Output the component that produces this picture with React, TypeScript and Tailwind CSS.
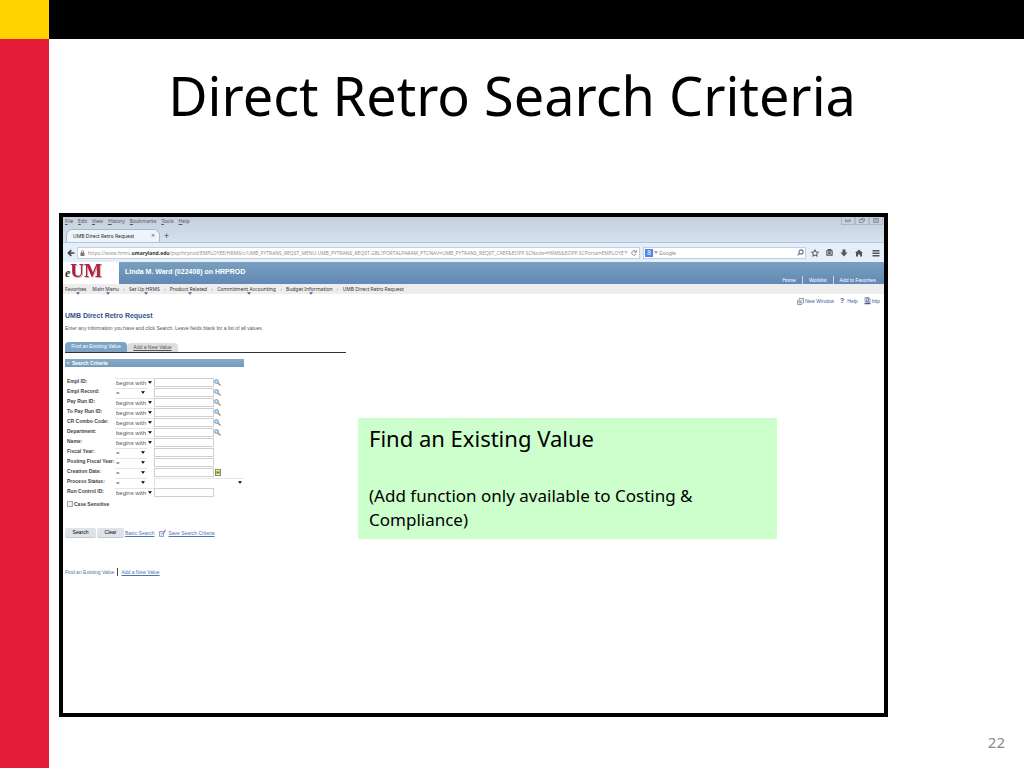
import type { ReactNode } from 'react';

const arial = "font-['Liberation_Sans',Arial,sans-serif]";
const noto = "font-['Noto_Sans',sans-serif]";

type Field = {
  id: string;
  label: string;
  op: 'begins with' | '=';
  extra?: 'lookup' | 'calendar' | 'list';
};

const fields: Field[] = [
  { id: 'empl-id', label: 'Empl ID:', op: 'begins with', extra: 'lookup' },
  { id: 'empl-record', label: 'Empl Record:', op: '=', extra: 'lookup' },
  { id: 'pay-run', label: 'Pay Run ID:', op: 'begins with', extra: 'lookup' },
  { id: 'to-pay-run', label: 'To Pay Run ID:', op: 'begins with', extra: 'lookup' },
  { id: 'combo', label: 'CR Combo Code:', op: 'begins with', extra: 'lookup' },
  { id: 'dept', label: 'Department:', op: 'begins with', extra: 'lookup' },
  { id: 'name', label: 'Name:', op: 'begins with' },
  { id: 'fiscal', label: 'Fiscal Year:', op: '=' },
  { id: 'posting', label: 'Posting Fiscal Year:', op: '=' },
  { id: 'created', label: 'Creation Date:', op: '=', extra: 'calendar' },
  { id: 'status', label: 'Process Status:', op: '=', extra: 'list' },
  { id: 'run-control', label: 'Run Control ID:', op: 'begins with' },
];

const crumbs = ['Main Menu', 'Set Up HRMS', 'Product Related', 'Commitment Accounting', 'Budget Information'];

function Caret({ className = '' }: { className?: string }) {
  return (
    <svg viewBox="0 0 6 4" className={`h-[3px] w-[4px] ${className}`} aria-hidden="true">
      <path d="M0 0h6L3 4z" fill="currentColor" />
    </svg>
  );
}

function Lookup() {
  return (
    <svg viewBox="0 0 14 14" className="size-[7px]" aria-hidden="true">
      <path d="M8 8l5 5" stroke="#c98a4a" strokeWidth="3" />
      <circle cx="5" cy="5" r="4" fill="#b5dcf7" stroke="#6f9cc9" strokeWidth="1.8" />
    </svg>
  );
}

function Calendar() {
  return (
    <svg viewBox="0 0 12 14" className="h-[7px] w-[6px]" aria-hidden="true">
      <rect x="1" y="1" width="10" height="12" fill="#e9ecb0" stroke="#8d9148" strokeWidth="2" />
      <path d="M4 4v6M8 4v6M4 7h4" stroke="#5c6130" strokeWidth="1.5" />
    </svg>
  );
}

function Picker({ id, label, value, className }: { id: string; label: string; value: string; className: string }) {
  return (
    <span className={`grid h-[9px] items-center ${className}`}>
      <select
        id={id}
        aria-label={label}
        defaultValue={value}
        className="col-start-1 row-start-1 h-[9px] w-full appearance-none border-t border-[#e6e6e6] bg-transparent pl-px text-[6px] leading-[8px] text-[#555]"
      >
        <option>{value}</option>
      </select>
      <Caret className="pointer-events-none col-start-1 row-start-1 mr-[2px] justify-self-end text-black" />
    </span>
  );
}

function Row({ field }: { field: Field }) {
  return (
    <div className="flex h-[10px] items-center">
      <label htmlFor={field.id} className="w-[48px] shrink-0 pb-[2px] text-[5px] leading-[8px] font-bold whitespace-nowrap text-[#444]">
        {field.label}
      </label>
      <div className="w-[39px] shrink-0">
        <Picker
          id={`${field.id}-op`}
          label={`${field.label} operator`}
          value={field.op}
          className={field.op === '=' ? 'w-[32px]' : 'w-[39px]'}
        />
      </div>
      {field.extra === 'list' ? (
        <Picker id={field.id} label={field.label} value="" className="w-[90px] border-l border-[#ddd]" />
      ) : (
        <input id={field.id} className="h-[9px] w-[60px] border border-[#cfcfcf] bg-white px-px text-[6px]" />
      )}
      {field.extra === 'lookup' && (
        <button type="button" aria-label={`Look up ${field.label}`}>
          <Lookup />
        </button>
      )}
      {field.extra === 'calendar' && (
        <button type="button" aria-label="Choose a date" className="ml-px">
          <Calendar />
        </button>
      )}
    </div>
  );
}

function WindowButton({ label, children }: { label: string; children: ReactNode }) {
  return (
    <button aria-label={label} className="flex h-[8px] w-[14px] items-center justify-center border border-t-0 border-[#b0bac4]">
      <svg viewBox="0 0 12 10" className="h-[5px] w-[6px]" fill="none" stroke="#7b8590" strokeWidth="1.6" aria-hidden="true">
        {children}
      </svg>
    </button>
  );
}

function BrowserChrome() {
  return (
    <div className={`${noto} text-[5px] leading-[8px] text-[#555]`}>
      <div className="bg-linear-to-b from-[#c3ced9] to-[#d5e2ef]">
        <div className="flex h-[10px] items-start pl-[2px]">
          <nav className="flex gap-[5px]" aria-label="Browser menu">
            {['File', 'Edit', 'View', 'History', 'Bookmarks', 'Tools', 'Help'].map((m) => (
              <button key={m} className="leading-[9px] first-letter:underline">
                {m}
              </button>
            ))}
          </nav>
          <div className="mr-px ml-auto flex">
            <WindowButton label="Minimize">
              <rect x="1" y="4" width="10" height="3" />
            </WindowButton>
            <WindowButton label="Restore">
              <path d="M4 3V1h7v5H8M1 3h7v6H1z" />
            </WindowButton>
            <WindowButton label="Close">
              <path d="M1 1h10v8H1zM3 2l6 6M9 2L3 8" />
            </WindowButton>
          </div>
        </div>
        <div className="flex h-[15px] items-end pl-[3px]">
          <div className="flex h-[13px] w-[94px] items-center justify-between rounded-t-md border border-b-0 border-[#a9b8c8] bg-[#eef4fb] pr-[4px] pl-[6px] text-[#222]">
            <span className="whitespace-nowrap">UMB Direct Retro Request</span>
            <button aria-label="Close tab" className="text-[7px] text-[#666]">×</button>
          </div>
          <button aria-label="New tab" className="ml-[4px] text-[9px] leading-[12px] text-[#444]">+</button>
        </div>
      </div>
      <div className="flex h-[20px] items-center border-t border-[#b3c5d9] bg-[#e6eff9] px-[4px]">
        <button aria-label="Back" className="mr-[2px] rounded-full text-[#444]">
          <svg viewBox="0 0 14 14" className="size-[8px]" fill="none" stroke="currentColor" strokeWidth="3" aria-hidden="true">
            <path d="M13 7H3M7.500 2L2.500 7l5 5" />
          </svg>
        </button>
        <div className="flex h-[12px] min-w-0 flex-1 items-center border border-[#c5d0dc] bg-white px-[2px]">
          <svg viewBox="0 0 10 12" className="mr-[3px] h-[6px] w-[5px] shrink-0" aria-hidden="true">
            <path d="M1 5h8v7H1z" fill="#777" />
            <path d="M3 6V3a2 2 0 014 0v3" fill="none" stroke="#777" strokeWidth="1.500" />
          </svg>
          <span className="min-w-0 flex-1 font-['Open_Sans',sans-serif] whitespace-nowrap text-[#8c8c8c]">
            https://www.hrms.<b className="text-[#333]">umaryland.edu</b>
            /psp/hrprod/EMPLOYEE/HRMS/c/UMB_PYTRANS_REQST_MENU.UMB_PYTRANS_REQST.GBL?PORTALPARAM_PTCNAV=UMB_PYTRANS_REQST_CREF&amp;EOPP.SCNode=HRMS&amp;EOPP.SCPortal=EMPLOYE
          </span>
          <Caret className="mr-[3px] shrink-0 text-[#bbb]" />
          <button aria-label="Reload">
            <svg viewBox="0 0 12 12" className="size-[6px]" fill="none" stroke="#777" strokeWidth="1.600" aria-hidden="true">
              <path d="M10 8a4.500 4.500 0 11-.5-5M10.500 0v4.500H6" />
            </svg>
          </button>
        </div>
        <div className="ml-[3px] flex h-[12px] w-[163px] shrink-0 items-center border border-[#c5d0dc] bg-white pr-px pl-px">
          <span className="flex size-[8px] items-center justify-center bg-[#4a86e8] text-[7px] text-white">8</span>
          <Caret className="mx-px text-[#999]" />
          <input aria-label="Search the web" placeholder="Google" className="min-w-0 flex-1 placeholder:text-[#888]" />
          <svg viewBox="0 0 12 12" className="size-[7px]" fill="none" stroke="#4f6f96" strokeWidth="1.800" aria-hidden="true">
            <circle cx="7" cy="5" r="3.500" />
            <path d="M4.500 7.500L1 11" />
          </svg>
        </div>
        <div className="ml-[5px] flex items-center gap-[7px] text-[#555]">
          <button aria-label="Bookmark this page">
            <svg viewBox="0 0 16 16" className="size-[8px]" fill="none" stroke="currentColor" strokeWidth="2" aria-hidden="true">
              <path d="M8 1.500l2 4.500 5 .5-3.800 3.200 1.200 4.800L8 12l-4.400 2.500 1.200-4.800L1 6.500 6 6z" />
            </svg>
          </button>
          <button aria-label="Bookmarks list">
            <svg viewBox="0 0 16 16" className="size-[7px]" fill="none" stroke="currentColor" strokeWidth="2.500" aria-hidden="true">
              <path d="M2 4h12v10H2zM5 4V1h6v3M5 7h6M5 10h6" />
            </svg>
          </button>
          <button aria-label="Downloads">
            <svg viewBox="0 0 16 16" className="size-[8px]" fill="currentColor" aria-hidden="true">
              <path d="M5 1h6v6h4l-7 8-7-8h4z" />
            </svg>
          </button>
          <button aria-label="Home page">
            <svg viewBox="0 0 16 16" className="size-[8px]" fill="currentColor" aria-hidden="true">
              <path d="M8 1l8 7h-2v7h-4v-4H6v4H2V8H0z" />
            </svg>
          </button>
          <button aria-label="Open menu" className="ml-[2px]">
            <svg viewBox="0 0 16 16" className="size-[8px]" fill="currentColor" aria-hidden="true">
              <path d="M1 2h14v3H1zM1 7h14v3H1zM1 12h14v3H1z" />
            </svg>
          </button>
        </div>
      </div>
    </div>
  );
}

function PortalHeader() {
  return (
    <>
      <header className={`${arial} flex h-[22px] bg-white`}>
        <div className="flex w-[56px] items-baseline pl-[2px] font-['Liberation_Serif',serif] leading-[18px] font-bold">
          <span className="text-[12px] text-[#333] italic">e</span>
          <span className="text-[19px] text-[#b5203c] drop-shadow-[1px_1px_0_#c9b3b8]">UM</span>
        </div>
        <div className="flex flex-1 justify-between bg-linear-to-b from-[#79a0bf] to-[#6288b5] pl-[6px] text-white">
          <h2 className="text-[7px] leading-[20px] font-bold">Linda M. Ward (022408) on HRPROD</h2>
          <nav className="flex items-center self-end pr-[2px] text-[5px] leading-[8px]" aria-label="Portal">
            <a href="#home" className="pr-[6px]">Home</a>
            <a href="#worklist" className="border-l border-[#c5d5e5] px-[6px]">Worklist</a>
            <a href="#favorites" className="border-l border-[#c5d5e5] px-[6px]">Add to Favorites</a>
          </nav>
        </div>
      </header>
      <nav className={`${noto} flex h-[10px] items-center bg-[#ededed] pl-[2px] text-[5px] leading-[9px] text-[#333]`} aria-label="Breadcrumb">
        <a href="#favorites-menu" className="relative mr-[6px]">
          Favorites
          <Caret className="absolute -bottom-px left-1/2 text-[#4c5fb5]" />
        </a>
        {crumbs.map((c) => (
          <span key={c} className="flex">
            <a href="#menu" className="relative">
              {c}
              <Caret className="absolute -bottom-px left-1/2 text-[#4c5fb5]" />
            </a>
            <span className="w-[10px] text-center text-[#888]">›</span>
          </span>
        ))}
        <a href="#request">UMB Direct Retro Request</a>
      </nav>
    </>
  );
}

function SearchPage() {
  return (
    <main className={`${arial} pl-[2px] text-[5px] leading-[8px] text-[#555]`}>
      <div className="flex justify-end gap-[6px] pt-[3px] pr-[4px] text-[#3d5f99]">
        <a href="#new-window" className="flex items-center gap-px">
          <svg viewBox="0 0 14 14" className="size-[7px]" fill="none" stroke="#6d7f99" strokeWidth="1.500" aria-hidden="true">
            <path d="M4 1h9v9H4zM1 4v9h9M11 3L6 8M6 5v3h3" />
          </svg>
          New Window
        </a>
        <a href="#help" className="flex items-center gap-[3px]">
          <b className="text-[7px] text-[#5a45c0]">?</b> Help
        </a>
        <a href="#http" className="flex items-center gap-px">
          <svg viewBox="0 0 14 16" className="h-[8px] w-[7px]" fill="none" stroke="#77808f" strokeWidth="1.500" aria-hidden="true">
            <path d="M2 1h7v8H2zM5 3h7v7H5zM7 5h3M7 7h3" />
            <path d="M1 13h12" stroke="#5a45c0" strokeWidth="3" />
          </svg>
          http
        </a>
      </div>
      <h3 className="mt-[6px] text-[7px] leading-[10px] font-bold text-[#31548d]">UMB Direct Retro Request</h3>
      <p className="mt-[3px]">Enter any information you have and click Search. Leave fields blank for a list of all values.</p>
      <div className="mt-[11px] flex h-[10px] w-[281px] items-end border-b border-[#333]">
        <a href="#find" className="h-[10px] w-[62px] rounded-t bg-[#7da3c4] text-center leading-[9px] text-white">
          Find an Existing Value
        </a>
        <a href="#add" className="h-[9px] w-[51px] rounded-t bg-[#dedede] text-center leading-[9px] text-[#555] underline">
          Add a New Value
        </a>
      </div>
      <h4 className="mt-[6px] flex h-[8px] w-[179px] items-center gap-[2px] bg-linear-to-b from-[#86abca] to-[#7399be] pl-px font-bold text-white">
        <Caret className="text-[#e6d7a0]" />
        Search Criteria
      </h4>
      <form onSubmit={(e) => e.preventDefault()}>
        <div className="mt-[10px] pl-[2px]">
          {fields.map((f) => (
            <Row key={f.id} field={f} />
          ))}
        </div>
        <label className="mt-[3px] flex items-center gap-px pl-[2px] font-bold text-[#444]">
          <input type="checkbox" className="size-[6px] appearance-none border border-[#aaa] bg-[#f0f0f0]" />
          Case Sensitive
        </label>
        <div className="mt-[19px] flex h-[11px] items-center">
          <button type="submit" className="h-[10px] w-[31px] rounded-xs border-b border-[#c5cbd2] bg-[#dfe3e8] text-black">Search</button>
          <button type="reset" className="ml-px h-[10px] w-[27px] rounded-xs border-b border-[#c5cbd2] bg-[#dfe3e8] text-black">Clear</button>
          <a href="#basic" className="ml-px text-[#4a77b0] underline">Basic Search</a>
          <svg viewBox="0 0 14 16" className="mr-[2px] ml-[5px] h-[8px] w-[7px]" fill="none" aria-hidden="true">
            <path d="M1 5h8v10H1z" fill="#dfe3f5" stroke="#8088b8" strokeWidth="1.500" />
            <path d="M4 10l4-2 4-7 2 1-4 7z" fill="#6f7fd0" />
          </svg>
          <a href="#save" className="text-[#4a77b0] underline">Save Search Criteria</a>
        </div>
      </form>
      <div className="mt-[30px] flex">
        <a href="#find" className="border-r border-[#444] pr-[3px] text-[#4a77b0]">Find an Existing Value</a>
        <a href="#add" className="pl-[3px] text-[#4a77b0] underline">Add a New Value</a>
      </div>
    </main>
  );
}

export default function App() {
  return (
    <div className={`${noto} flex min-h-screen bg-white text-black`}>
      <div className="flex w-[49px] shrink-0 flex-col">
        <div className="h-[39px] bg-[#ffd200]" />
        <div className="flex-1 bg-[#e31b37]" />
      </div>
      <div className="flex min-w-0 flex-1 flex-col">
        <div className="h-[39px] bg-black" />
        <h1 className="mr-[49px] pt-[19px] text-center text-[54px] leading-[74px]">Direct Retro Search Criteria</h1>
        <section className="relative mt-[81px] mr-[136px] ml-[10px] min-h-[504px] border-4 border-black bg-white">
          <BrowserChrome />
          <PortalHeader />
          <SearchPage />
          <aside className="absolute top-[201px] left-[295px] w-[419px] bg-[#ccffcc] px-[11px] pt-[6px] pb-[7px]">
            <p className="text-[22px] leading-[29px]">Find an Existing Value</p>
            <p className="mt-[31px] text-[17px] leading-[24px]">(Add function only available to Costing &amp; Compliance)</p>
          </aside>
        </section>
        <footer className="mt-auto pr-[19px] pb-[14px] text-right text-[15px] leading-[24px] text-[#8b8b8b]">22</footer>
      </div>
    </div>
  );
}
